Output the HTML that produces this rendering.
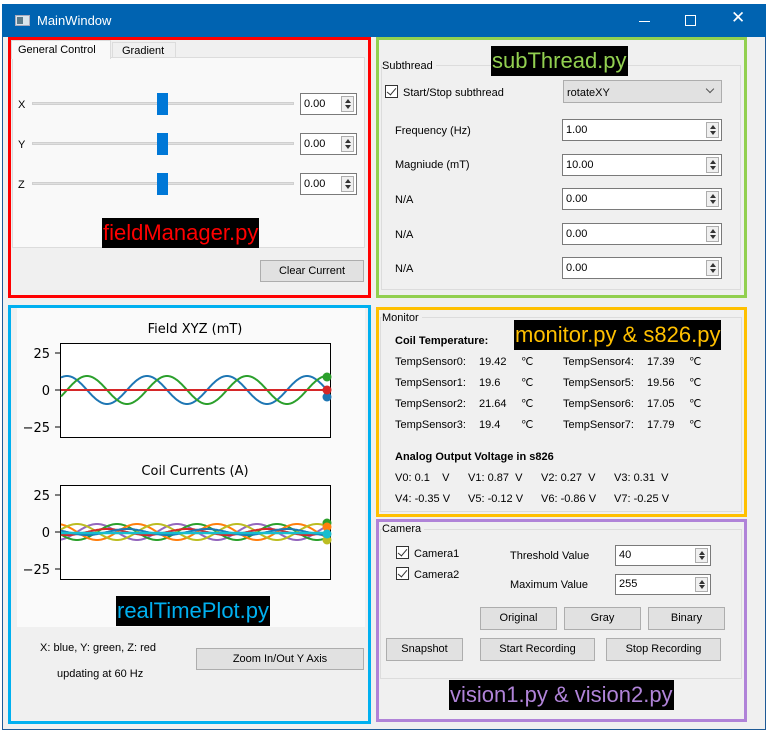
<!DOCTYPE html>
<html><head><meta charset="utf-8">
<style>
*{box-sizing:border-box;margin:0;padding:0}
body{width:768px;height:730px;background:#fff;font-family:"Liberation Sans",sans-serif;font-size:11px;color:#000;position:relative;overflow:hidden}
.a{position:absolute}
.t{position:absolute;white-space:nowrap;line-height:14px}
.btn{position:absolute;background:#e1e1e1;border:1px solid #adadad;text-align:center;line-height:20px;font-size:11px}
.spin{position:absolute;background:#fff;border:1px solid #7a7a7a;font-size:11px;padding-left:3px}
.spin .ar{position:absolute;right:2px;top:2px;bottom:2px;width:13px;background:#f0f0f0;border:1px solid #adadad}
.spin .ar:before{content:"";position:absolute;left:3px;top:2px;border:3px solid transparent;border-bottom:4px solid #333;border-top:0}
.spin .ar:after{content:"";position:absolute;left:3px;bottom:2px;border:3px solid transparent;border-top:4px solid #333;border-bottom:0}
.cb{position:absolute;width:13px;height:13px;border:1px solid #333;background:#fff}
.cb:after{content:"";position:absolute;left:3px;top:0px;width:4px;height:8px;border:solid #333;border-width:0 1.5px 1.5px 0;transform:rotate(40deg)}
.grp{position:absolute;border:1px solid #dcdcdc}
.lbl{position:absolute;background:#000;font-size:22px;line-height:30px;white-space:nowrap;padding:0 1px}
</style></head><body>
<!-- window frame -->
<div class="a" style="left:2px;top:4px;width:764px;height:726px;background:#f0f0f0;border:1px solid #1e5a96"></div>
<div class="a" style="left:2px;top:4px;width:764px;height:33px;background:#0063b1"></div>
<div class="a" style="left:15px;top:15px;width:15px;height:11px;background:#d8e4ec;border:1px solid #aab"></div>
<div class="a" style="left:17px;top:17px;width:6px;height:7px;background:#5a7a8a"></div>
<div class="t" style="left:37px;top:14px;color:#fff;font-size:13px">MainWindow</div>
<div class="a" style="left:639px;top:21px;width:11px;height:1px;background:#fff"></div>
<div class="a" style="left:685px;top:15px;width:11px;height:11px;border:1px solid #fff"></div>
<div class="t" style="left:731px;top:11px;color:#fff;font-size:17px">✕</div>

<!-- red: fieldManager -->
<div class="a" style="left:12px;top:57px;width:353px;height:233px;background:#f9f9f9;border:1px solid #dcdcdc"></div>
<div class="a" style="left:12px;top:247px;width:353px;height:43px;background:#f0f0f0;border-top:1px solid #dcdcdc"></div>
<div class="a" style="left:11px;top:40px;width:100px;height:19px;background:#f9f9f9;border:1px solid #dcdcdc;border-bottom:none"></div>
<div class="t" style="left:18px;top:43px">General Control</div>
<div class="a" style="left:112px;top:42px;width:64px;height:16px;background:#f0f0f0;border:1px solid #dcdcdc"></div>
<div class="t" style="left:122px;top:44px">Gradient</div>
<div class="t" style="left:18px;top:98px">X</div>
<div class="t" style="left:18px;top:138px">Y</div>
<div class="t" style="left:18px;top:178px">Z</div>
<div class="a" style="left:32px;top:102px;width:262px;height:3px;background:#e0e0e0;border:1px solid #d0d0d0"></div>
<div class="a" style="left:32px;top:142px;width:262px;height:3px;background:#e0e0e0;border:1px solid #d0d0d0"></div>
<div class="a" style="left:32px;top:182px;width:262px;height:3px;background:#e0e0e0;border:1px solid #d0d0d0"></div>
<div class="a" style="left:157px;top:93px;width:11px;height:22px;background:#0078d7"></div>
<div class="a" style="left:157px;top:133px;width:11px;height:22px;background:#0078d7"></div>
<div class="a" style="left:157px;top:173px;width:11px;height:22px;background:#0078d7"></div>
<div class="spin" style="left:300px;top:93px;width:57px;height:22px;line-height:20px">0.00<span class="ar"></span></div>
<div class="spin" style="left:300px;top:133px;width:57px;height:22px;line-height:20px">0.00<span class="ar"></span></div>
<div class="spin" style="left:300px;top:173px;width:57px;height:22px;line-height:20px">0.00<span class="ar"></span></div>
<div class="lbl" style="left:102px;top:218px;color:#ff0000">fieldManager.py</div>
<div class="btn" style="left:260px;top:260px;width:104px;height:22px">Clear Current</div>
<div class="a" style="left:8px;top:37px;width:363px;height:261px;border:3px solid #ff0000"></div>

<!-- blue: plots -->
<div class="a" style="left:17px;top:307px;width:348px;height:320px;background:#fafafa"></div>
<svg class="a" style="left:17px;top:307px" width="348" height="320">
<g font-family="DejaVu Sans, sans-serif" font-size="13" fill="#000">
<text x="178" y="26" text-anchor="middle">Field XYZ (mT)</text>
<text x="178" y="168" text-anchor="middle">Coil Currents (A)</text>
<text x="33" y="51" text-anchor="end">25</text>
<text x="33" y="88" text-anchor="end">0</text>
<text x="33" y="125" text-anchor="end">−25</text>
<text x="33" y="193" text-anchor="end">25</text>
<text x="33" y="230" text-anchor="end">0</text>
<text x="33" y="267" text-anchor="end">−25</text>
</g>
<g stroke="#000" stroke-width="1"><line x1="38" y1="46" x2="43" y2="46"/><line x1="38" y1="83" x2="43" y2="83"/><line x1="38" y1="120" x2="43" y2="120"/>
<line x1="38" y1="188" x2="43" y2="188"/><line x1="38" y1="225" x2="43" y2="225"/><line x1="38" y1="262" x2="43" y2="262"/></g>
<rect x="43.5" y="36.5" width="270" height="94" fill="#fff" stroke="#000"/>
<rect x="43.5" y="178.5" width="270" height="94" fill="#fff" stroke="#000"/>
<g id="lines" fill="none" stroke-width="2"></g>
</svg>
<script>
(function(){
var g=document.getElementById('lines'),ns='http://www.w3.org/2000/svg';
function w(c,y0,amp,per,ph,x0,x1){var p=[];for(var x=x0;x<=x1;x+=1){p.push(x+','+(y0-amp*Math.cos(2*Math.PI*(x-ph)/per)).toFixed(1));}
var l=document.createElementNS(ns,'polyline');l.setAttribute('points',p.join(' '));l.setAttribute('stroke',c);g.appendChild(l);}
function d(c,x,y){var e=document.createElementNS(ns,'circle');e.setAttribute('cx',x);e.setAttribute('cy',y);e.setAttribute('r',4.5);e.setAttribute('fill',c);g.appendChild(e);}
w('#1f77b4',83,14,80,50,44,310);w('#2ca02c',83,14,80,70,44,310);
var l=document.createElementNS(ns,'line');l.setAttribute('x1',44);l.setAttribute('x2',313);l.setAttribute('y1',83);l.setAttribute('y2',83);l.setAttribute('stroke','#d62728');l.setAttribute('stroke-width',2);g.appendChild(l);
d('#1f77b4',310,90);d('#2ca02c',310,70);d('#d62728',310,83);
var cs=['#9467bd','#2ca02c','#ff7f0e','#bcbd22','#d62728','#1f77b4'],ph=[0,20,40,60,10,30];
for(var i=0;i<cs.length;i++)w(cs[i],225,i<4?8:3,80,ph[i],44,310);
var c=document.createElementNS(ns,'line');c.setAttribute('x1',44);c.setAttribute('x2',313);c.setAttribute('y1',226);c.setAttribute('y2',226);c.setAttribute('stroke','#17becf');c.setAttribute('stroke-width',2.5);g.appendChild(c);
d('#2ca02c',310,216);d('#ff7f0e',310,220);d('#bcbd22',310,233);d('#17becf',310,227);
})();
</script>
<div class="lbl" style="left:116px;top:596px;color:#00b0f0">realTimePlot.py</div>
<div class="t" style="left:40px;top:641px">X: blue, Y: green, Z: red</div>
<div class="t" style="left:57px;top:667px">updating at 60 Hz</div>
<div class="btn" style="left:196px;top:648px;width:168px;height:22px">Zoom In/Out Y Axis</div>
<div class="a" style="left:8px;top:305px;width:363px;height:419px;border:3px solid #00b0f0"></div>

<!-- green: subthread -->
<div class="grp" style="left:381px;top:65px;width:360px;height:225px"></div>
<div class="t" style="left:382px;top:59px;background:#f0f0f0;padding-right:3px">Subthread</div>
<div class="lbl" style="left:491px;top:46px;color:#92d050">subThread.py</div>
<div class="cb" style="left:385px;top:85px"></div>
<div class="t" style="left:403px;top:86px">Start/Stop subthread</div>
<div class="a" style="left:563px;top:80px;width:159px;height:23px;background:#e1e1e1;border:1px solid #adadad"></div>
<div class="t" style="left:567px;top:86px">rotateXY</div>
<div class="a" style="left:707px;top:86px;width:6px;height:6px;border:solid #555;border-width:0 1px 1px 0;transform:rotate(45deg)"></div>
<div class="t" style="left:395px;top:124px">Frequency (Hz)</div>
<div class="t" style="left:395px;top:158px">Magniude (mT)</div>
<div class="t" style="left:395px;top:193px">N/A</div>
<div class="t" style="left:395px;top:228px">N/A</div>
<div class="t" style="left:395px;top:262px">N/A</div>
<div class="spin" style="left:562px;top:119px;width:160px;height:22px;line-height:20px">1.00<span class="ar"></span></div>
<div class="spin" style="left:562px;top:154px;width:160px;height:22px;line-height:20px">10.00<span class="ar"></span></div>
<div class="spin" style="left:562px;top:188px;width:160px;height:22px;line-height:20px">0.00<span class="ar"></span></div>
<div class="spin" style="left:562px;top:223px;width:160px;height:22px;line-height:20px">0.00<span class="ar"></span></div>
<div class="spin" style="left:562px;top:257px;width:160px;height:22px;line-height:20px">0.00<span class="ar"></span></div>
<div class="a" style="left:376px;top:37px;width:371px;height:261px;border:3px solid #92d050"></div>

<!-- yellow: monitor -->
<div class="grp" style="left:380px;top:317px;width:362px;height:195px"></div>
<div class="t" style="left:382px;top:311px;background:#f0f0f0;padding-right:3px">Monitor</div>
<div class="lbl" style="left:514px;top:320px;color:#ffc000">monitor.py &amp; s826.py</div>
<div class="t" style="left:395px;top:334px;font-weight:bold">Coil Temperature:</div>
<div class="t" style="left:395px;top:355px">TempSensor0:</div><div class="t" style="left:479px;top:355px">19.42</div><div class="t" style="left:521px;top:355px">℃</div>
<div class="t" style="left:395px;top:376px">TempSensor1:</div><div class="t" style="left:479px;top:376px">19.6</div><div class="t" style="left:521px;top:376px">℃</div>
<div class="t" style="left:395px;top:397px">TempSensor2:</div><div class="t" style="left:479px;top:397px">21.64</div><div class="t" style="left:521px;top:397px">℃</div>
<div class="t" style="left:395px;top:418px">TempSensor3:</div><div class="t" style="left:479px;top:418px">19.4</div><div class="t" style="left:521px;top:418px">℃</div>
<div class="t" style="left:563px;top:355px">TempSensor4:</div><div class="t" style="left:647px;top:355px">17.39</div><div class="t" style="left:689px;top:355px">℃</div>
<div class="t" style="left:563px;top:376px">TempSensor5:</div><div class="t" style="left:647px;top:376px">19.56</div><div class="t" style="left:689px;top:376px">℃</div>
<div class="t" style="left:563px;top:397px">TempSensor6:</div><div class="t" style="left:647px;top:397px">17.05</div><div class="t" style="left:689px;top:397px">℃</div>
<div class="t" style="left:563px;top:418px">TempSensor7:</div><div class="t" style="left:647px;top:418px">17.79</div><div class="t" style="left:689px;top:418px">℃</div>
<div class="t" style="left:395px;top:450px;font-weight:bold">Analog Output Voltage in s826</div>
<div class="t" style="left:395px;top:471px">V0: 0.1 &nbsp;&nbsp;&nbsp;V</div><div class="t" style="left:468px;top:471px">V1: 0.87 &nbsp;V</div><div class="t" style="left:541px;top:471px">V2: 0.27 &nbsp;V</div><div class="t" style="left:614px;top:471px">V3: 0.31 &nbsp;V</div>
<div class="t" style="left:395px;top:492px">V4: -0.35 V</div><div class="t" style="left:468px;top:492px">V5: -0.12 V</div><div class="t" style="left:541px;top:492px">V6: -0.86 V</div><div class="t" style="left:614px;top:492px">V7: -0.25 V</div>
<div class="a" style="left:376px;top:307px;width:371px;height:210px;border:3px solid #ffc000"></div>

<!-- purple: camera -->
<div class="grp" style="left:380px;top:529px;width:362px;height:150px"></div>
<div class="t" style="left:382px;top:522px;background:#f0f0f0;padding-right:3px">Camera</div>
<div class="cb" style="left:396px;top:546px"></div><div class="t" style="left:414px;top:547px">Camera1</div>
<div class="cb" style="left:396px;top:567px"></div><div class="t" style="left:414px;top:568px">Camera2</div>
<div class="t" style="left:510px;top:549px">Threshold Value</div>
<div class="t" style="left:510px;top:578px">Maximum Value</div>
<div class="spin" style="left:615px;top:545px;width:96px;height:21px;line-height:19px">40<span class="ar"></span></div>
<div class="spin" style="left:615px;top:574px;width:96px;height:21px;line-height:19px">255<span class="ar"></span></div>
<div class="btn" style="left:480px;top:607px;width:77px;height:23px">Original</div>
<div class="btn" style="left:564px;top:607px;width:77px;height:23px">Gray</div>
<div class="btn" style="left:648px;top:607px;width:77px;height:23px">Binary</div>
<div class="btn" style="left:386px;top:638px;width:77px;height:23px">Snapshot</div>
<div class="btn" style="left:480px;top:638px;width:115px;height:23px">Start Recording</div>
<div class="btn" style="left:606px;top:638px;width:115px;height:23px">Stop Recording</div>
<div class="lbl" style="left:449px;top:680px;color:#b083d8">vision1.py &amp; vision2.py</div>
<div class="a" style="left:376px;top:519px;width:371px;height:203px;border:3px solid #b083d8"></div>
</body></html>
